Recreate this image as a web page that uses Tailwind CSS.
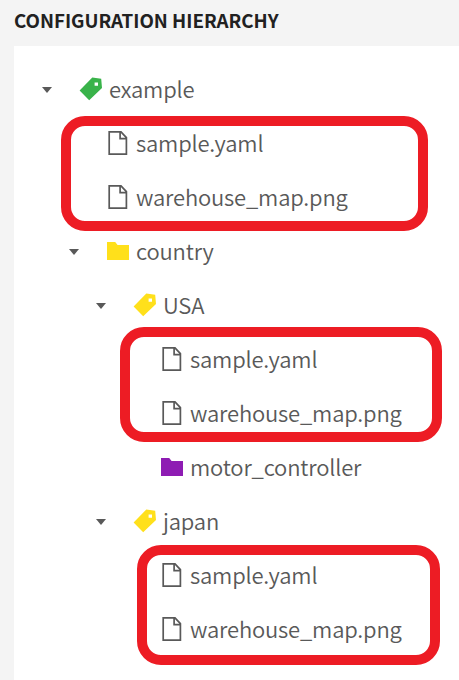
<!DOCTYPE html>
<html lang="en">
<head>
<meta charset="utf-8">
<title>Configuration hierarchy</title>
<script src="https://cdn.jsdelivr.net/npm/@tailwindcss/browser@4"></script>
</head>
<body class="relative h-[680px] w-[459px] overflow-hidden bg-[#f4f4f4] font-['Noto_Sans_CJK_SC','Noto_Sans',sans-serif] text-[#595959]">
<svg class="hidden">
  <symbol id="tag" viewBox="0 0 24 24"><path fill="currentColor" fill-rule="evenodd" d="M13.3.6 22.2 1.8 23 11 10.2 23.2.6 13.5ZM15.6 5.4v3.4H19V5.4Z"/></symbol>
  <symbol id="file" viewBox="0 0 20 24"><path fill="none" stroke="currentColor" stroke-width="1.7" d="M1.2.9H13l5.4 5.8v16.4H1.2ZM12.1.9v6.7h6.3"/></symbol>
  <symbol id="folder" viewBox="0 0 22 18"><path fill="currentColor" d="M0 0h8.2l2.4 3H22v15H0Z"/></symbol>
  <symbol id="caret" viewBox="0 0 10 6"><path fill="currentColor" d="M0 0h10L5 6Z"/></symbol>
</svg>
<main class="flex h-full flex-col pl-[14px]">
  <h1 class="h-[46px] pt-[6px] text-[18.75px] leading-[28px] font-bold tracking-[-0.03px] whitespace-nowrap text-[#212121]"><span>CONFIGURATION HIERARCHY</span></h1>
  <ul class="flex-1 bg-white pt-[16px] text-[22px] leading-[52px] font-[350] tracking-[-0.18px] whitespace-nowrap">
    <li class="flex h-[54px] items-center pl-[28px]"><svg class="mt-[2px] mr-[27px] h-[6px] w-[10px]"><use href="#caret"/></svg><svg class="mr-[6px] h-6 w-6 text-[#39b34a]"><use href="#tag"/></svg><span class="pb-[2px]">example</span></li>
    <li class="flex h-[54px] items-center pl-[94px]"><svg class="mr-[8px] h-6 w-5"><use href="#file"/></svg><span class="pb-[2px]">sample.yaml</span></li>
    <li class="flex h-[54px] items-center pl-[94px]"><svg class="mr-[8px] h-6 w-5"><use href="#file"/></svg><span class="pb-[2px]">warehouse_map.png</span></li>
    <li class="flex h-[54px] items-center pl-[55px]"><svg class="mt-[2px] mr-[28px] h-[6px] w-[10px]"><use href="#caret"/></svg><svg class="mr-[7px] h-[18px] w-[22px] text-[#ffe01b]"><use href="#folder"/></svg><span class="pb-[2px]">country</span></li>
    <li class="flex h-[54px] items-center pl-[82px]"><svg class="mt-[2px] mr-[27px] h-[6px] w-[10px]"><use href="#caret"/></svg><svg class="mr-[6px] h-6 w-6 text-[#ffe01b]"><use href="#tag"/></svg><span class="pb-[2px]">USA</span></li>
    <li class="flex h-[54px] items-center pl-[148px]"><svg class="mr-[8px] h-6 w-5"><use href="#file"/></svg><span class="pb-[2px]">sample.yaml</span></li>
    <li class="flex h-[54px] items-center pl-[148px]"><svg class="mr-[8px] h-6 w-5"><use href="#file"/></svg><span class="pb-[2px]">warehouse_map.png</span></li>
    <li class="flex h-[54px] items-center pl-[147px]"><svg class="mr-[7px] h-[18px] w-[22px] text-[#8e1cb3]"><use href="#folder"/></svg><span class="pb-[2px]">motor_controller</span></li>
    <li class="flex h-[54px] items-center pl-[82px]"><svg class="mt-[2px] mr-[27px] h-[6px] w-[10px]"><use href="#caret"/></svg><svg class="mr-[6px] h-6 w-6 text-[#ffe01b]"><use href="#tag"/></svg><span class="pb-[2px]">japan</span></li>
    <li class="flex h-[54px] items-center pl-[148px]"><svg class="mr-[8px] h-6 w-5"><use href="#file"/></svg><span class="pb-[2px]">sample.yaml</span></li>
    <li class="flex h-[54px] items-center pl-[148px]"><svg class="mr-[8px] h-6 w-5"><use href="#file"/></svg><span class="pb-[2px]">warehouse_map.png</span></li>
  </ul>
</main>
<div class="absolute top-[116px] left-[61px] h-[115px] w-[367px] rounded-[24px] border-[10px] border-[#ed1c24]"></div>
<div class="absolute top-[327px] left-[120px] h-[115px] w-[322px] rounded-[24px] border-[10px] border-[#ed1c24]"></div>
<div class="absolute top-[545px] left-[137px] h-[120px] w-[303px] rounded-[24px] border-[10px] border-[#ed1c24]"></div>
</body>
</html>
